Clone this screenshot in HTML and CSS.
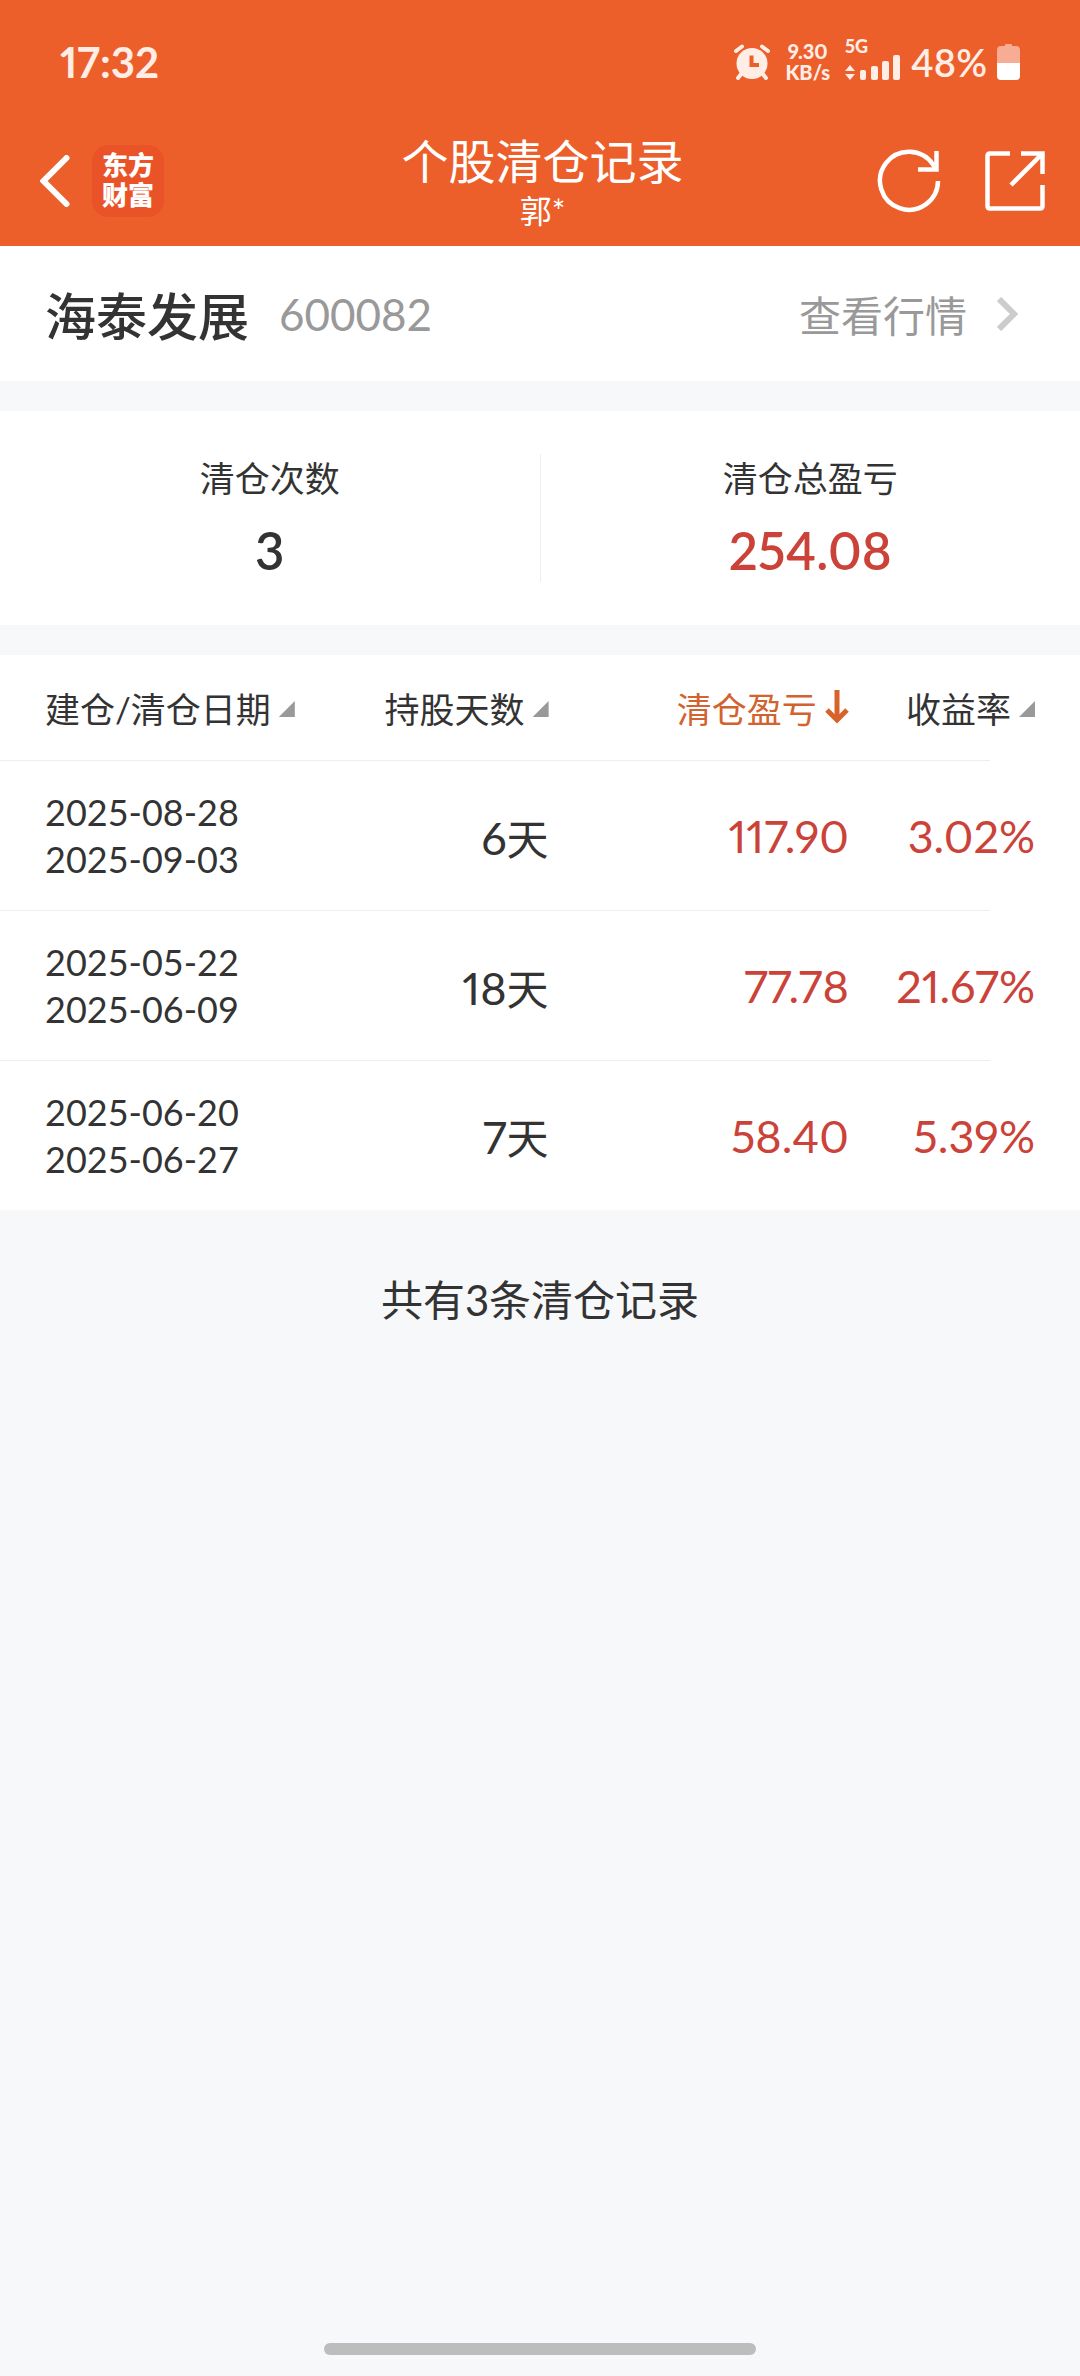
FILE: index.html
```html
<!DOCTYPE html>
<html lang="zh-CN">
<head>
    <meta charset="UTF-8">
    <meta name="viewport" content="width=device-width, initial-scale=1.0">
    <title>个股清仓记录</title>
    <link rel="stylesheet" href="styles.css">
</head>
<body>
    <header class="top">
        <!-- 状态栏 -->
        <div class="status-bar">
            <span class="clock">17:32</span>
            <div class="status-icons">
                <svg class="alarm" width="36" height="36" viewBox="0 0 36 36">
                    <g fill="none" stroke="currentColor" stroke-width="4" stroke-linecap="round">
                        <path d="M2 7 L8 2.500 M34 7 L28 2.500"/>
                        <path d="M8 29 L4 34 M28 29 L32 34"/>
                    </g>
                    <circle cx="18" cy="19.500" r="15.500" fill="currentColor"/>
                    <path d="M17.500 11.500 V21 H25" fill="none" stroke="#ec5f2b" stroke-width="4"/>
                </svg>
                <div class="speed"><span>9.30</span><span>KB/s</span></div>
                <div class="signal">
                    <span>5G</span>
                    <svg width="56" height="26" viewBox="0 0 56 26" fill="currentColor">
                        <path d="M0 17 L5 11 L10 17 Z M0 20 H10 L5 26 Z"/>
                        <rect x="15" y="16" width="6" height="10" rx="2"/>
                        <rect x="26" y="12" width="7" height="14" rx="2"/>
                        <rect x="37" y="7" width="7" height="19" rx="2"/>
                        <rect x="48" y="1" width="7" height="25" rx="2"/>
                    </svg>
                </div>
                <span class="battery-text">48%</span>
                <svg class="battery" width="23" height="36" viewBox="0 0 23 36">
                    <path d="M8 2 V1 Q8 0 9 0 H14 Q15 0 15 1 V2 H19 Q23 2 23 6 V20 H0 V6 Q0 2 4 2 Z" fill="#f7ad93"/>
                    <path d="M0 19 H23 V32 Q23 36 19 36 H4 Q0 36 0 32 Z" fill="#fff"/>
                </svg>
            </div>
        </div>

        <!-- 导航栏 -->
        <nav class="nav-bar">
            <div class="nav-left">
                <button class="icon-button" type="button" aria-label="返回">
                    <svg width="30" height="52" viewBox="0 0 30 52" fill="none" stroke="#fff" stroke-width="6" stroke-linecap="round">
                        <path d="M26.500 3 L3.500 26 L26.500 49"/>
                    </svg>
                </button>
                <span class="logo">东方<br>财富</span>
            </div>
            <div class="nav-title">
                <h1>个股清仓记录</h1>
                <p>郭*</p>
            </div>
            <div class="nav-right">
                <button class="icon-button" type="button" aria-label="刷新">
                    <svg width="64" height="64" viewBox="0 0 64 64" fill="none" stroke="#fff" stroke-width="4.500">
                        <path d="M61 32 A29 29 0 1 1 56 15.500 L59 20"/>
                        <path d="M59.500 2 V20.500 H41"/>
                    </svg>
                </button>
                <button class="icon-button" type="button" aria-label="分享">
                    <svg width="60" height="60" viewBox="0 0 60 60" fill="none" stroke="#fff" stroke-width="4.500">
                        <path d="M25 2.500 H5 Q2.500 2.500 2.500 5 V55 Q2.500 57.500 5 57.500 H55 Q57.500 57.500 57.500 55 V34"/>
                        <path d="M36 2.500 H57.500 V23 M57.500 2.500 L26 34"/>
                    </svg>
                </button>
            </div>
        </nav>
    </header>

    <section class="stock">
        <h2>海泰发展</h2>
        <span class="code">600082</span>
        <a class="quote" href="#">查看行情
            <svg width="21" height="34" viewBox="0 0 21 34" fill="none" stroke="#ccc" stroke-width="6">
                <path d="M2 2 L17 17 L2 32"/>
            </svg>
        </a>
    </section>

    <section class="summary">
        <div class="summary-item">
            <span class="label">清仓次数</span>
            <strong>3</strong>
        </div>
        <div class="summary-item">
            <span class="label">清仓总盈亏</span>
            <strong class="up">254.08</strong>
        </div>
    </section>

    <table class="records">
        <colgroup>
            <col class="col-date">
            <col class="col-days">
            <col class="col-profit">
            <col class="col-rate">
        </colgroup>
        <thead>
            <tr>
                <th><button type="button">建仓/清仓日期<i class="corner"></i></button></th>
                <th><button type="button">持股天数<i class="corner"></i></button></th>
                <th>
                    <button class="active" type="button">清仓盈亏<svg width="24" height="34" viewBox="0 0 24 34" fill="none" stroke="#d9622b" stroke-width="5">
                            <path d="M12 0 V29"/>
                            <path d="M2 20 L12 30 L22 20"/>
                        </svg></button>
                </th>
                <th><button type="button">收益率<i class="corner"></i></button></th>
            </tr>
        </thead>
        <tbody>
            <tr>
                <td>2025-08-28<br>2025-09-03</td>
                <td>6<span class="unit">天</span></td>
                <td class="up">117.90</td>
                <td class="up">3.02%</td>
            </tr>
            <tr>
                <td>2025-05-22<br>2025-06-09</td>
                <td>18<span class="unit">天</span></td>
                <td class="up">77.78</td>
                <td class="up">21.67%</td>
            </tr>
            <tr>
                <td>2025-06-20<br>2025-06-27</td>
                <td>7<span class="unit">天</span></td>
                <td class="up">58.40</td>
                <td class="up">5.39%</td>
            </tr>
        </tbody>
    </table>

    <p class="total">共有3条清仓记录</p>

    <div class="home-bar"></div>
</body>
</html>
```
FILE: styles.css
```css
* {
    box-sizing: border-box;
    margin: 0;
    padding: 0;
}

body {
    display: flex;
    flex-direction: column;
    min-height: 100vh;
    background: #f7f8fa;
    color: #333;
    font-family: Lato, "Noto Sans CJK SC", sans-serif;
    font-variant-numeric: proportional-nums;
}

button {
    background: none;
    border: none;
    color: inherit;
    font: inherit;
    cursor: pointer;
}

svg {
    display: block;
    flex-shrink: 0;
}

.up {
    color: #cb4239;
}

/* 顶部 */
.top {
    background: #ec5f2b;
    color: #fff;
}

.status-bar {
    display: flex;
    justify-content: space-between;
    align-items: center;
    height: 124px;
    padding: 0 60px;
    color: #ffede6;
}

.clock {
    font-size: 42px;
    font-weight: 700;
}

.status-icons {
    display: flex;
    align-items: center;
}

.speed {
    display: flex;
    flex-direction: column;
    align-items: center;
    margin: 0 15px;
    font-size: 20px;
    font-weight: 900;
    line-height: 21px;
}

.signal {
    display: flex;
    flex-direction: column;
    gap: 2px;
    padding-bottom: 4px;
    font-size: 18px;
    font-weight: 900;
    line-height: 12px;
}

.battery-text {
    margin: 0 10px;
    font-size: 38px;
    font-weight: 600;
}

.nav-bar {
    display: grid;
    grid-template-columns: 1fr auto 1fr;
    align-items: center;
    height: 122px;
    padding: 0 35px 8px 40px;
}

.nav-left, .nav-right {
    display: flex;
    align-items: center;
}

.nav-left {
    gap: 22px;
}

.nav-right {
    justify-content: flex-end;
    gap: 44px;
}

.logo {
    width: 72px;
    height: 72px;
    padding-top: 5px;
    border-radius: 16px;
    background: #ea5328;
    font-size: 26px;
    font-weight: 900;
    line-height: 30px;
    text-align: center;
}

.nav-title {
    text-align: center;
}

.nav-title h1 {
    font-size: 47px;
    font-weight: 400;
    line-height: 60px;
}

.nav-title p {
    font-size: 32px;
    line-height: 40px;
}

/* 股票 */
.stock {
    display: flex;
    align-items: center;
    height: 135px;
    padding: 0 62px 0 45px;
    background: #fff;
}

.stock h2 {
    font-size: 51px;
    font-weight: 500;
}

.code {
    margin-left: 30px;
    color: #999;
    font-size: 44px;
    font-variant-numeric: tabular-nums;
}

.quote {
    display: flex;
    align-items: center;
    gap: 30px;
    margin-left: auto;
    color: #999;
    font-size: 42px;
    text-decoration: none;
}

/* 汇总 */
.summary {
    display: flex;
    margin: 30px 0;
    padding: 43px 0;
    background: #fff;
}

.summary-item {
    display: flex;
    flex: 1;
    flex-direction: column;
    align-items: center;
    height: 128px;
}

.summary-item + .summary-item {
    border-left: 1px solid #eee;
}

.label {
    font-size: 35px;
    line-height: 48px;
}

.summary-item strong {
    margin-top: 14px;
    font-size: 51px;
    font-weight: 600;
    line-height: 70px;
}

/* 记录表 */
.records {
    width: 100%;
    border-collapse: collapse;
    table-layout: fixed;
    background: #fff;
}

.col-date {
    width: 31.5%;
}

.col-days {
    width: 19.3%;
}

.col-profit {
    width: 27.8%;
}

.records tr {
    height: 150px;
    background: linear-gradient(#eee, #eee) no-repeat left bottom;
    background-size: calc(100% - 90px) 1px;
}

.records thead tr {
    height: 106px;
}

.records tbody tr:last-child {
    height: 149px;
    background: none;
}

.records th {
    padding-bottom: 2px;
    font-size: 35px;
    font-weight: 400;
    text-align: right;
}

.records th button {
    display: inline-flex;
    align-items: center;
    gap: 8px;
    white-space: nowrap;
}

.records td {
    font-size: 45px;
    text-align: right;
}

.records th:first-child,
.records td:first-child {
    padding-left: 45px;
    text-align: left;
}

.records th:last-child,
.records td:last-child {
    padding-right: 45px;
}

.records td:first-child {
    font-size: 36px;
    font-variant-numeric: tabular-nums;
    line-height: 47px;
}

.records .active {
    color: #d2622e;
}

.corner {
    width: 16px;
    height: 16px;
    margin-top: 4px;
    background: #999;
    clip-path: polygon(100% 0, 100% 100%, 0 100%);
}

.unit {
    font-size: 42px;
}

.total {
    padding: 60px 0;
    font-size: 42px;
    line-height: 60px;
    text-align: center;
}

.home-bar {
    width: 40%;
    height: 12px;
    margin: auto auto 21px;
    border-radius: 6px;
    background: #bcbebd;
}
```
